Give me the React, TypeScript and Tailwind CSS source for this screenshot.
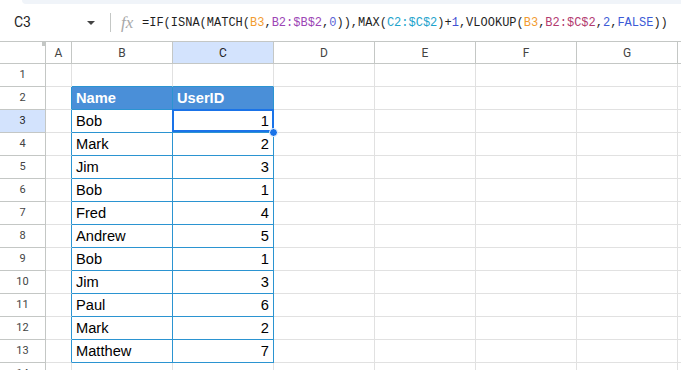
import React from 'react'

const cols = [
  { key: 'A', w: 'w-[26px]' },
  { key: 'B', w: 'w-[101px]' },
  { key: 'C', w: 'w-[101px]' },
  { key: 'D', w: 'w-[101px]' },
  { key: 'E', w: 'w-[101px]' },
  { key: 'F', w: 'w-[101px]' },
  { key: 'G', w: 'w-[101px]' },
]

const data: [string, number][] = [
  ['Bob', 1],
  ['Mark', 2],
  ['Jim', 3],
  ['Bob', 1],
  ['Fred', 4],
  ['Andrew', 5],
  ['Bob', 1],
  ['Jim', 3],
  ['Paul', 6],
  ['Mark', 2],
  ['Matthew', 7],
]

// formula pieces with the range colours sheets uses
const formula: [string, string][] = [
  ['=IF(ISNA(MATCH(', 'text-[#1f1f1f]'],
  ['B3', 'text-[#f29b30]'],
  [',', 'text-[#1f1f1f]'],
  ['B2:$B$2', 'text-[#9c45b5]'],
  [',', 'text-[#1f1f1f]'],
  ['0', 'text-[#5b63d6]'],
  [')),MAX(', 'text-[#1f1f1f]'],
  ['C2:$C$2', 'text-[#1ea3cc]'],
  [')+', 'text-[#1f1f1f]'],
  ['1', 'text-[#3f51d4]'],
  [',VLOOKUP(', 'text-[#1f1f1f]'],
  ['B3', 'text-[#f29b30]'],
  [',', 'text-[#1f1f1f]'],
  ['B2:$C$2', 'text-[#b23a6f]'],
  [',', 'text-[#1f1f1f]'],
  ['2', 'text-[#3c5bd6]'],
  [',', 'text-[#1f1f1f]'],
  ['FALSE', 'text-[#3c5bd6]'],
  ['))', 'text-[#1f1f1f]'],
]

const FormulaBar = () => (
  <div className="flex h-[37px] items-center bg-white">
    <div className="w-[14px]" />
    <span className="w-[68px] font-['Roboto',sans-serif] text-[14px] text-[#1f1f1f]">C3</span>
    <svg width="10" height="6" viewBox="0 0 10 6" className="ml-[4px]">
      <path d="M1 1h8L5 5z" fill="#444" />
    </svg>
    <div className="ml-[14px] h-[19px] w-px bg-[#c4c7c5]" />
    <span className="ml-[10px] w-[21px] font-['Liberation_Serif',serif] text-[17px] italic text-[#a8a8a8]">
      fx
    </span>
    <span className="whitespace-nowrap font-['Liberation_Mono',monospace] text-[12px]">
      {formula.map(([t, c], i) => (
        <span key={i} className={c}>
          {t}
        </span>
      ))}
    </span>
  </div>
)

const Cell = ({ row, col }: { row: number; col: string }) => {
  const inTable = (col === 'B' || col === 'C') && row >= 2 && row <= 13
  const rightBlue = (col === 'A' && row >= 2 && row <= 13) || inTable
  const bottomBlue = (col === 'B' || col === 'C') && row >= 1 && row <= 13
  const isHead = inTable && row === 2
  const selected = col === 'C' && row === 3
  const w = cols.find((c) => c.key === col)!.w

  let text: string | number = ''
  if (isHead) text = col === 'B' ? 'Name' : 'UserID'
  else if (inTable) text = col === 'B' ? data[row - 3][0] : data[row - 3][1]

  return (
    <div
      className={`relative flex shrink-0 items-end border-r border-b pb-[2px] ${w} ${
        rightBlue ? 'border-r-[#2b94d1]' : 'border-r-[#e1e1e1]'
      } ${bottomBlue ? 'border-b-[#2b94d1]' : 'border-b-[#e1e1e1]'} ${
        isHead ? 'bg-[#4a8fd8] pl-[4px] font-bold text-white' : 'bg-white text-black'
      } ${!isHead && col === 'C' ? 'justify-end pr-[4px]' : 'pl-[4px]'}`}
    >
      <span className="font-['Liberation_Sans',Arial,sans-serif] text-[14.67px] leading-[17px]">
        {text}
      </span>
      {selected && (
        <>
          <div className="absolute -top-[1px] -right-[1px] bottom-0 -left-[1px] border-2 border-[#1a73e8]" />
          <div className="absolute -right-[5px] -bottom-[5px] z-10 h-[9px] w-[9px] rounded-full border border-white bg-[#1a73e8]" />
        </>
      )}
    </div>
  )
}

export default function App() {
  const rows = Array.from({ length: 14 }, (_, i) => i + 1)

  return (
    <div className="h-[370px] w-[681px] overflow-hidden bg-white">
      <div className="flex h-[4px] bg-white">
        <div className="ml-[22px] flex-1 rounded-bl-[14px] bg-[#f0f4f9]" />
      </div>
      <FormulaBar />

      {/* column headers */}
      <div className="flex h-[23px] border-y border-[#c4c7c5] font-['Roboto',sans-serif] text-[12px] text-[#444]">
        <div className="relative w-[46px] shrink-0 border-r border-[#c4c7c5]">
          <div className="absolute top-0 right-0 h-[4px] w-[3px] bg-[#c4c7c5]" />
        </div>
        {cols.map((c) => (
          <div
            key={c.key}
            className={`flex shrink-0 items-center justify-center border-r border-[#c4c7c5] ${c.w} ${
              c.key === 'C' ? 'bg-[#d3e3fd] text-[#1f1f1f]' : 'bg-white'
            }`}
          >
            {c.key}
          </div>
        ))}
      </div>

      {rows.map((r) => (
        <div key={r} className="flex h-[23px]">
          <div
            className={`flex w-[46px] shrink-0 items-center justify-center border-r border-b border-[#c4c7c5] font-['Roboto',sans-serif] text-[11px] ${
              r === 3 ? 'bg-[#d3e3fd] text-[#1f1f1f]' : 'bg-white text-[#444]'
            }`}
          >
            {r}
          </div>
          {cols.map((c) => (
            <Cell key={c.key} row={r} col={c.key} />
          ))}
          <div className="flex-1 border-b border-[#e1e1e1]" />
        </div>
      ))}
    </div>
  )
}
